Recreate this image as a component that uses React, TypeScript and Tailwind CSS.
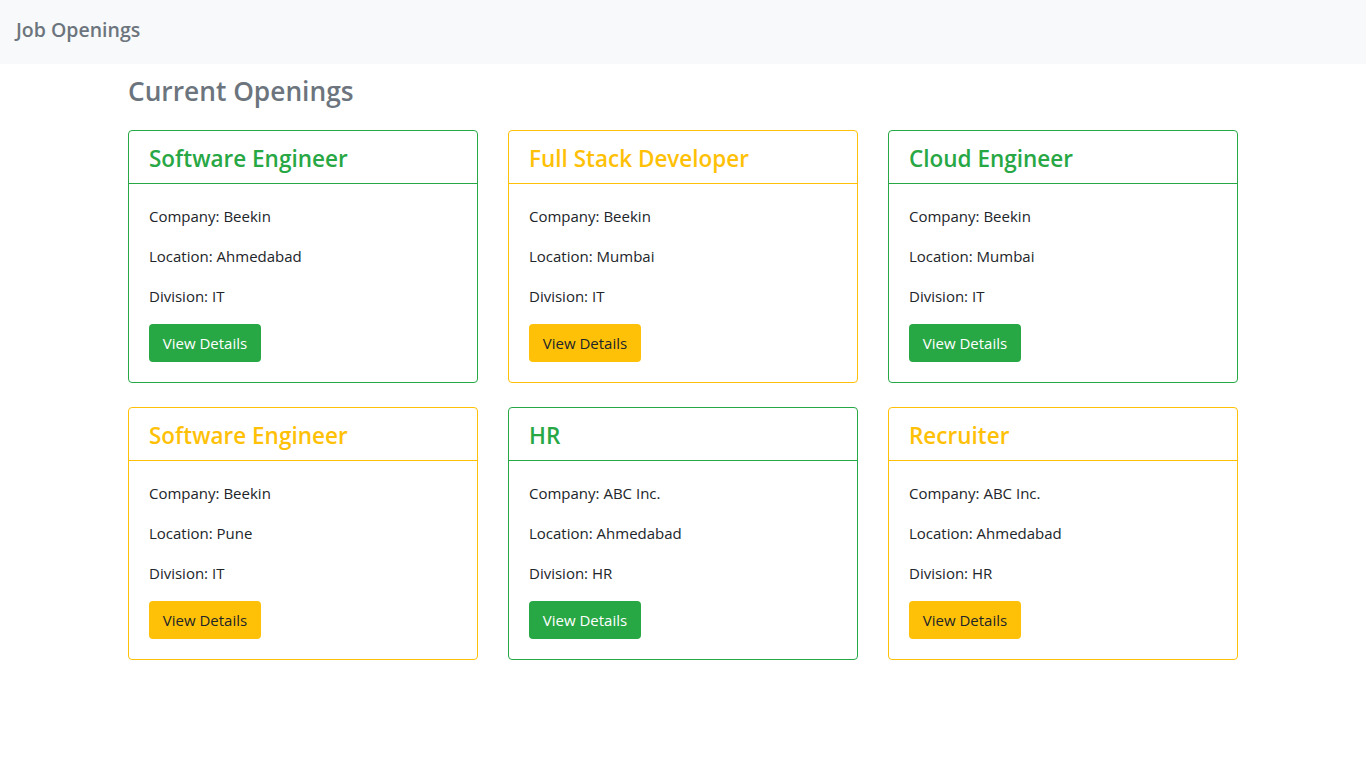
const jobs = [
  { title: "Software Engineer", company: "Beekin", location: "Ahmedabad", division: "IT", tone: "success" },
  { title: "Full Stack Developer", company: "Beekin", location: "Mumbai", division: "IT", tone: "warning" },
  { title: "Cloud Engineer", company: "Beekin", location: "Mumbai", division: "IT", tone: "success" },
  { title: "Software Engineer", company: "Beekin", location: "Pune", division: "IT", tone: "warning" },
  { title: "HR", company: "ABC Inc.", location: "Ahmedabad", division: "HR", tone: "success" },
  { title: "Recruiter", company: "ABC Inc.", location: "Ahmedabad", division: "HR", tone: "warning" },
];

function JobCard({ job }: { job: (typeof jobs)[number] }) {
  const green = job.tone === "success";
  return (
    <div className={"rounded-[4px] border " + (green ? "border-[#28a745]" : "border-[#ffc107]")}>
      <div className={"px-5 pt-[13px] pb-[10px] border-b " + (green ? "border-[#28a745]" : "border-[#ffc107]")}>
        <h4 className={"text-[22.5px] leading-[29px] font-semibold " + (green ? "text-[#28a745]" : "text-[#ffc107]")}>
          {job.title}
        </h4>
      </div>
      <div className="p-5 text-[15px] leading-6 text-[#212529]">
        <p className="mb-4">Company: {job.company}</p>
        <p className="mb-4">Location: {job.location}</p>
        <p className="mb-4">Division: {job.division}</p>
        <button
          className={
            "h-[38px] w-[112px] rounded-[4px] text-[15px] " +
            (green ? "bg-[#28a745] text-white" : "bg-[#ffc107] text-[#212529]")
          }
        >
          View Details
        </button>
      </div>
    </div>
  );
}

export default function App() {
  return (
    <div className="min-h-screen bg-white font-['Open_Sans',sans-serif]">
      <nav className="h-16 bg-[#f8f9fa] px-4 pb-1 flex items-center">
        <span className="text-[19.5px] font-semibold text-[#6c757d]">Job Openings</span>
      </nav>

      <main className="w-[1110px] mx-auto">
        <h3 className="mt-[10px] mb-[22px] text-[26.3px] leading-[34px] font-semibold text-[#6c757d]">
          Current Openings
        </h3>
        <div className="grid grid-cols-3 gap-x-[30px] gap-y-6">
          {jobs.map((job, i) => (
            <JobCard key={i} job={job} />
          ))}
        </div>
      </main>
    </div>
  );
}
